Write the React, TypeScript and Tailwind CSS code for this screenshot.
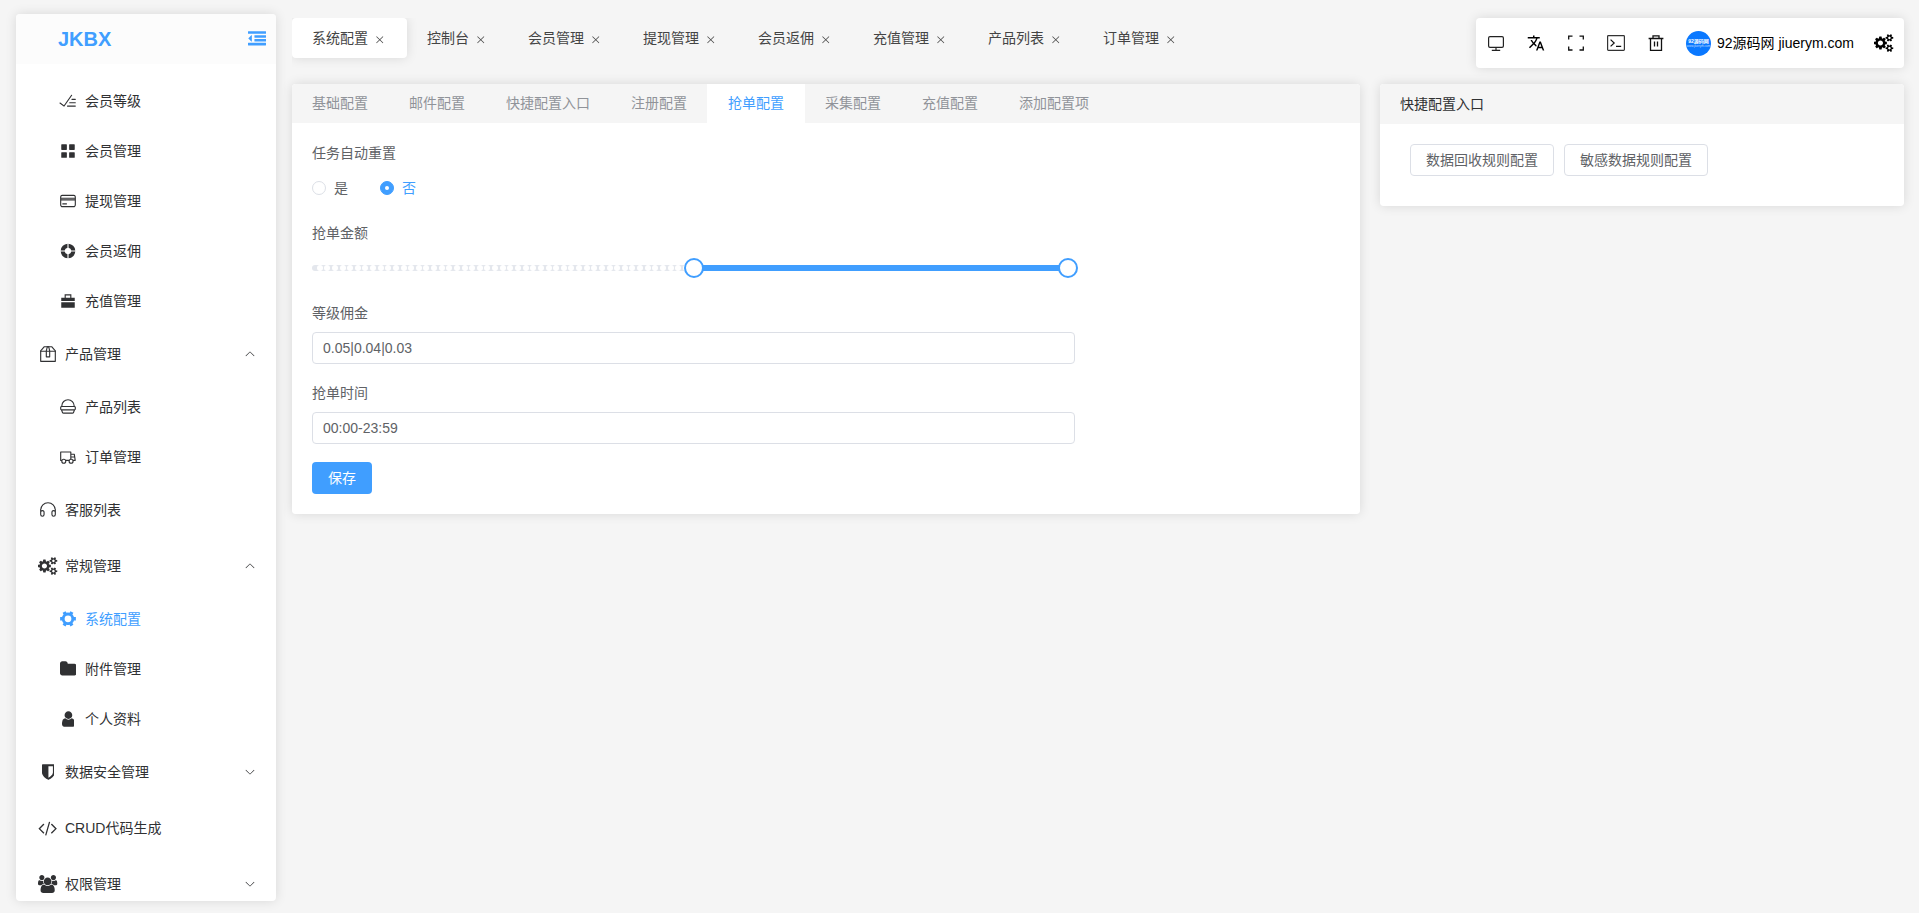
import { useState } from 'react'
import type { ReactNode } from 'react'
import { MdTranslate } from 'react-icons/md'

// Element Plus 图标，画布 1024
const EL = {
  finished:
    'M280.768 753.728 691.456 167.04a32 32 0 1 1 52.416 36.672L314.24 817.472a32 32 0 0 1-45.44 7.296l-230.4-172.8a32 32 0 0 1 38.4-51.2zM736 448a32 32 0 1 1 0-64h192a32 32 0 1 1 0 64zM608 640a32 32 0 0 1 0-64h319.936a32 32 0 1 1 0 64zM480 832a32 32 0 1 1 0-64h447.936a32 32 0 1 1 0 64z',
  menu: 'M160 448a32 32 0 0 1-32-32V160.064a32 32 0 0 1 32-32h256a32 32 0 0 1 32 32V416a32 32 0 0 1-32 32zm448 0a32 32 0 0 1-32-32V160.064a32 32 0 0 1 32-32h255.936a32 32 0 0 1 32 32V416a32 32 0 0 1-32 32zM160 896a32 32 0 0 1-32-32V608a32 32 0 0 1 32-32h256a32 32 0 0 1 32 32v256a32 32 0 0 1-32 32zm448 0a32 32 0 0 1-32-32V608a32 32 0 0 1 32-32h255.936a32 32 0 0 1 32 32v256a32 32 0 0 1-32 32z',
  creditCard:
    'M896 324.096c0-42.368-2.496-55.296-9.536-68.48a52.352 52.352 0 0 0-22.144-22.08c-13.12-7.04-26.048-9.536-68.416-9.536H228.096c-42.368 0-55.296 2.496-68.48 9.536a52.352 52.352 0 0 0-22.08 22.144c-7.04 13.12-9.536 26.048-9.536 68.416v375.808c0 42.368 2.496 55.296 9.536 68.48a52.352 52.352 0 0 0 22.144 22.08c13.12 7.04 26.048 9.536 68.416 9.536h567.808c42.368 0 55.296-2.496 68.48-9.536a52.352 52.352 0 0 0 22.08-22.144c7.04-13.12 9.536-26.048 9.536-68.416zm64 0v375.808c0 57.088-5.952 77.76-17.088 98.56-11.136 20.928-27.52 37.312-48.384 48.448-20.864 11.136-41.6 17.088-98.56 17.088H228.032c-57.088 0-77.76-5.952-98.56-17.088a116.288 116.288 0 0 1-48.448-48.384c-11.136-20.864-17.088-41.6-17.088-98.56V324.032c0-57.088 5.952-77.76 17.088-98.56 11.136-20.928 27.52-37.312 48.384-48.448 20.864-11.136 41.6-17.088 98.56-17.088H795.84c57.088 0 77.76 5.952 98.56 17.088 20.928 11.136 37.312 27.52 48.448 48.384 11.136 20.864 17.088 41.6 17.088 98.56zM64 320h896v64H64zm0 96h896v64H64zm128 224h256v64H192z',
  help: 'M926.784 480H701.312A192.512 192.512 0 0 0 544 322.688V97.216A416.064 416.064 0 0 1 926.784 480m0 64A416.064 416.064 0 0 1 544 926.784V701.312A192.512 192.512 0 0 0 701.312 544zM97.28 544h225.472A192.512 192.512 0 0 0 480 701.312v225.472A416.064 416.064 0 0 1 97.216 544zm0-64A416.064 416.064 0 0 1 480 97.216v225.472A192.512 192.512 0 0 0 322.688 480H97.216z',
  briefcase: 'M320 320V128h384v192h192v192H128V320zM128 576h768v320H128zm256-256h256.064V192H384z',
  box: 'M317.056 128 128 344.064V896h768V344.064L706.944 128zm-14.528-64h418.944a32 32 0 0 1 24.064 10.88l206.528 236.096A32 32 0 0 1 960 332.032V928a32 32 0 0 1-32 32H96a32 32 0 0 1-32-32V332.032a32 32 0 0 1 7.936-21.12L278.4 75.008A32 32 0 0 1 302.528 64z',
  boxTape:
    'M64 320h896v64H64z M448 327.872V640h128V327.872L526.08 128h-28.16zM448 64h128l64 256v352a32 32 0 0 1-32 32H416a32 32 0 0 1-32-32V320z',
  burger:
    'M160 512a32 32 0 0 0-32 32v64a32 32 0 0 0 30.08 32H864a32 32 0 0 0 32-32v-64a32 32 0 0 0-32-32zm736-58.56A96 96 0 0 1 960 544v64a96 96 0 0 1-51.968 85.312L855.36 833.6a96 96 0 0 1-89.856 62.272H258.496A96 96 0 0 1 168.64 833.6l-52.608-140.224A96 96 0 0 1 64 608v-64a96 96 0 0 1 64-90.56V448a384 384 0 1 1 768 5.44M832 448a320 320 0 0 0-640 0zM512 704H188.352l40.192 107.136a32 32 0 0 0 29.952 20.736h507.008a32 32 0 0 0 29.952-20.736L835.648 704z',
  van: 'M128.896 736H96a32 32 0 0 1-32-32V224a32 32 0 0 1 32-32h576a32 32 0 0 1 32 32v96h164.544a32 32 0 0 1 31.616 27.136l54.144 352A32 32 0 0 1 922.688 736h-91.52a144 144 0 1 1-286.272 0H415.104a144 144 0 1 1-286.272 0zm23.36-64a143.872 143.872 0 0 1 239.488 0H568.32c17.088-25.6 42.24-45.376 71.744-55.808V256H128v416zm655.488 0h77.632l-19.648-128H704v64.896A144 144 0 0 1 807.744 672m48.128-192-14.72-96H704v96zM688 832a80 80 0 1 0 0-160 80 80 0 0 0 0 160m-416 0a80 80 0 1 0 0-160 80 80 0 0 0 0 160',
  headset:
    'M896 529.152V512a384 384 0 1 0-768 0v17.152A128 128 0 0 1 320 640v128a128 128 0 1 1-256 0V512a448 448 0 1 1 896 0v256a128 128 0 1 1-256 0V640a128 128 0 0 1 192-110.848M896 640a64 64 0 0 0-128 0v128a64 64 0 0 0 128 0zm-768 0v128a64 64 0 0 0 128 0V640a64 64 0 1 0-128 0',
  tools:
    'M764.416 254.72a351.68 351.68 0 0 1 86.336 149.184H960v192.064H850.752a351.68 351.68 0 0 1-86.336 149.312l54.72 94.72-166.272 96-54.592-94.72a352.64 352.64 0 0 1-172.48 0L371.136 936l-166.272-96 54.72-94.72a351.68 351.68 0 0 1-86.336-149.312H64v-192h109.248a351.68 351.68 0 0 1 86.336-149.312L204.8 160l166.208-96h.192l54.656 94.592a352.64 352.64 0 0 1 172.48 0L652.8 64h.128L819.2 160zM704 499.968a192 192 0 1 0-384 0 192 192 0 0 0 384 0',
  arrowDown:
    'M831.872 340.864 512 652.672 192.128 340.864a30.592 30.592 0 0 0-42.752 0 29.12 29.12 0 0 0 0 41.6L489.664 714.24a32 32 0 0 0 44.672 0l340.288-331.712a29.12 29.12 0 0 0 0-41.728 30.592 30.592 0 0 0-42.752 0z',
  close:
    'M764.288 214.592 512 466.88 259.712 214.592a31.936 31.936 0 0 0-45.12 45.12L466.752 512 214.528 764.224a31.936 31.936 0 1 0 45.12 45.184L512 557.184l252.288 252.288a31.936 31.936 0 0 0 45.12-45.12L557.12 512.064l252.288-252.352a31.936 31.936 0 1 0-45.12-45.184z',
}

// Font Awesome 4 字形，y 轴向上，em 为 1792
const FA = {
  cogs: {
    width: 1920,
    d: 'M896 640q0 106-75 181t-181 75t-181-75t-75-181t75-181t181-75t181 75t75 181zM1664 128q0 52-38 90t-90 38t-90-38t-38-90q0-53 37.5-90.5t90.5-37.5t90.5 37.5t37.5 90.5zM1664 1152q0 52-38 90t-90 38t-90-38t-38-90q0-53 37.5-90.5t90.5-37.5t90.5 37.5t37.5 90.5zM1280 731v-185q0-10-7-19.5t-16-10.5l-155-24q-11-35-32-76q34-48 90-115q7-11 7-20q0-12-7-19q-23-30-82.5-89.5t-78.5-59.5q-11 0-21 7l-115 90q-37-19-77-31q-11-108-23-155q-7-24-30-24h-186q-11 0-20 7.5t-10 17.5l-23 153q-34 10-75 31l-118-89q-7-7-20-7q-11 0-21 8q-144 133-144 160q0 9 7 19q10 14 41 53t47 61q-23 44-35 82l-152 24q-10 1-17 9.5t-7 19.5v185q0 10 7 19.5t16 10.5l155 24q11 35 32 76q-34 48-90 115q-7 11-7 20q0 12 7 20q22 30 82 89t79 59q11 0 21-7l115-90q34 18 77 32q11 108 23 154q7 24 30 24h186q11 0 20-7.5t10-17.5l23-153q34-10 75-31l118 89q8 7 20 7q11 0 21-8q144-133 144-160q0-8-7-19q-12-16-42-54t-45-60q23-48 34-82l152-23q10-2 17-10.5t7-19.5zM1920 198v-140q0-16-149-31q-12-27-30-52q51-113 51-138q0-4-4-7q-122-71-124-71q-8 0-46 47t-52 68q-20-2-30-2t-30 2q-14-21-52-68t-46-47q-2 0-124 71q-4 3-4 7q0 25 51 138q-18 25-30 52q-149 15-149 31v140q0 16 149 31q13 29 30 52q-51 113-51 138q0 4 4 7q4 2 35 20t59 34t30 16q8 0 46-46.5t52-67.5q20 2 30 2t30-2q51 71 92 112l6 2q4 0 124-70q4-3 4-7q0-25-51-138q17-23 30-52q149-15 149-31zM1920 1222v-140q0-16-149-31q-12-27-30-52q51-113 51-138q0-4-4-7q-122-71-124-71q-8 0-46 47t-52 68q-20-2-30-2t-30 2q-14-21-52-68t-46-47q-2 0-124 71q-4 3-4 7q0 25 51 138q-18 25-30 52q-149 15-149 31v140q0 16 149 31q13 29 30 52q-51 113-51 138q0 4 4 7q4 2 35 20t59 34t30 16q8 0 46-46.5t52-67.5q20 2 30 2t30-2q51 71 92 112l6 2q4 0 124-70q4-3 4-7q0-25-51-138q17-23 30-52q149-15 149-31z',
  },
  folder: {
    width: 1664,
    d: 'M1664 928v-704q0-92-66-158t-158-66h-1216q-92 0-158 66t-66 158v960q0 92 66 158t158 66h320q92 0 158-66t66-158v-32h672q92 0 158-66t66-158z',
  },
  user: {
    width: 1280,
    d: 'M1280 137q0-109-62.5-187t-150.5-78h-854q-88 0-150.5 78t-62.5 187q0 85 8.5 160.5t31.5 152t58.5 131t94 89t134.5 34.5q131-128 313-128t313 128q76 0 134.5-34.5t94-89t58.5-131t31.5-152t8.5-160.5zM1024 1024q0-159-112.5-271.5t-271.5-112.5t-271.5 112.5t-112.5 271.5t112.5 271.5t271.5 112.5t271.5-112.5t112.5-271.5z',
  },
  shield: {
    width: 1280,
    d: 'M1088 576v640h-448v-1137q119 63 213 137q235 184 235 360zM1280 1344v-768q0-86-33.5-170.5t-83-150t-118-127.5t-126.5-103t-121-77.5t-89.5-49.5t-42.5-20q-12-6-26-6t-26 6q-16 7-42.5 20t-89.5 49.5t-121 77.5t-126.5 103t-118 127.5t-83 150t-33.5 170.5v768q0 26 19 45t45 19h1152q26 0 45-19t19-45z',
  },
  code: {
    width: 1920,
    d: 'M617 137l-50-50q-10-10-23-10t-23 10l-466 466q-10 10-10 23t10 23l466 466q10 10 23 10t23-10l50-50q10-10 10-23t-10-23l-393-393l393-393q10-10 10-23t-10-23zM1208 1204l-373-1291q-4-13-15.5-19.5t-23.5-2.5l-62 17q-13 4-19.5 15.5t-2.5 24.5l373 1291q4 13 15.5 19.5t23.5 2.5l62-17q13-4 19.5-15.5t2.5-24.5zM1865 553l-466-466q-10-10-23-10t-23 10l-50 50q-10 10-10 23t10 23l393 393l-393 393q-10 10-10 23t10 23l50 50q10 10 23 10t23-10l466-466q10-10 10-23t-10-23z',
  },
  group: {
    width: 1920,
    d: 'M593 640q-162-5-265-128h-134q-82 0-138 40.5t-56 118.5q0 353 124 353q6 0 43.5-21t97.5-42.5t119-21.5q67 0 133 23q-5-37-5-66q0-139 81-256zM1664 3q0-120-73-189.5t-194-69.5h-874q-121 0-194 69.5t-73 189.5q0 53 3.5 103.5t14 109t26.5 108.5t43 97.5t62 81t85.5 53.5t111.5 20q10 0 43-21.5t73-48t107-48t135-21.5t135 21.5t107 48t73 48t43 21.5q61 0 111.5-20t85.5-53.5t62-81t43-97.5t26.5-108.5t14-109t3.5-103.5zM640 1280q0-106-75-181t-181-75t-181 75t-75 181t75 181t181 75t181-75t75-181zM1344 896q0-159-112.5-271.5t-271.5-112.5t-271.5 112.5t-112.5 271.5t112.5 271.5t271.5 112.5t271.5-112.5t112.5-271.5zM1920 671q0-78-56-118.5t-138-40.5h-134q-103 123-265 128q81 117 81 256q0 29-5 66q66-23 133-23q59 0 119 21.5t97.5 42.5t43.5 21q124 0 124-353zM1792 1280q0-106-75-181t-181-75t-181 75t-75 181t75 181t181 75t181-75t75-181z',
  },
  dedent: {
    width: 1792,
    d: 'M384 992v-576q0-13-9.5-22.5t-22.5-9.5q-14 0-23 9l-288 288q-9 9-9 23t9 23l288 288q9 9 23 9q13 0 22.5-9.5t9.5-22.5zM1792 224v-192q0-13-9.5-22.5t-22.5-9.5h-1728q-13 0-22.5 9.5t-9.5 22.5v192q0 13 9.5 22.5t22.5 9.5h1728q13 0 22.5-9.5t9.5-22.5zM1792 608v-192q0-13-9.5-22.5t-22.5-9.5h-1088q-13 0-22.5 9.5t-9.5 22.5v192q0 13 9.5 22.5t22.5 9.5h1088q13 0 22.5-9.5t9.5-22.5zM1792 992v-192q0-13-9.5-22.5t-22.5-9.5h-1088q-13 0-22.5 9.5t-9.5 22.5v192q0 13 9.5 22.5t22.5 9.5h1088q13 0 22.5-9.5t9.5-22.5zM1792 1376v-192q0-13-9.5-22.5t-22.5-9.5h-1728q-13 0-22.5 9.5t-9.5 22.5v192q0 13 9.5 22.5t22.5 9.5h1728q13 0 22.5-9.5t9.5-22.5z',
  },
}

function ElIcon({ d, className = 'size-[18px]' }: { d: string; className?: string }) {
  return (
    <svg viewBox="0 0 1024 1024" fill="currentColor" className={`shrink-0 ${className}`}>
      <path d={d} />
    </svg>
  )
}

function FaIcon({ name }: { name: keyof typeof FA }) {
  const { width, d } = FA[name]
  return (
    <svg
      viewBox={`0 0 ${width} 1792`}
      width={(width / 1792) * 18}
      height={18}
      fill="currentColor"
      className="shrink-0"
    >
      <path d={d} transform="translate(0 1536) scale(1 -1)" />
    </svg>
  )
}

interface MenuEntry {
  title: string
  icon: ReactNode
  sub?: boolean
  arrow?: 'up' | 'down'
}

const menus: MenuEntry[] = [
  { title: '会员等级', icon: <ElIcon d={EL.finished} />, sub: true },
  { title: '会员管理', icon: <ElIcon d={EL.menu} />, sub: true },
  { title: '提现管理', icon: <ElIcon d={EL.creditCard} />, sub: true },
  { title: '会员返佣', icon: <ElIcon d={EL.help} />, sub: true },
  { title: '充值管理', icon: <ElIcon d={EL.briefcase} />, sub: true },
  {
    title: '产品管理',
    icon: (
      <svg viewBox="0 0 1024 1024" fill="currentColor" className="size-[18px] shrink-0">
        <path d={EL.box} />
        <path d={EL.boxTape} />
      </svg>
    ),
    arrow: 'up',
  },
  { title: '产品列表', icon: <ElIcon d={EL.burger} />, sub: true },
  { title: '订单管理', icon: <ElIcon d={EL.van} />, sub: true },
  { title: '客服列表', icon: <ElIcon d={EL.headset} /> },
  { title: '常规管理', icon: <FaIcon name="cogs" />, arrow: 'up' },
  { title: '系统配置', icon: <ElIcon d={EL.tools} />, sub: true },
  { title: '附件管理', icon: <FaIcon name="folder" />, sub: true },
  { title: '个人资料', icon: <FaIcon name="user" />, sub: true },
  { title: '数据安全管理', icon: <FaIcon name="shield" />, arrow: 'down' },
  { title: 'CRUD代码生成', icon: <FaIcon name="code" /> },
  { title: '权限管理', icon: <FaIcon name="group" />, arrow: 'down' },
]

const navTabs = ['系统配置', '控制台', '会员管理', '提现管理', '会员返佣', '充值管理', '产品列表', '订单管理']

const configTabs = [
  '基础配置',
  '邮件配置',
  '快捷配置入口',
  '注册配置',
  '抢单配置',
  '采集配置',
  '充值配置',
  '添加配置项',
]

function Sidebar() {
  return (
    <aside className="mt-[14px] flex h-[887px] w-[260px] shrink-0 flex-col overflow-hidden rounded bg-white shadow-[0_0_12px_rgba(0,0,0,0.12)]">
      <div className="flex h-[50px] shrink-0 items-center justify-between bg-[#fcfcfc] pr-[10px] pb-px pl-[42px] text-[#409eff]">
        <span className="text-xl leading-none font-bold">JKBX</span>
        <FaIcon name="dedent" />
      </div>
      <nav className="min-h-0 flex-1 overflow-hidden pt-3">
        {menus.map((item) => (
          <div
            key={item.title}
            className={`flex items-center pr-5 ${item.sub ? 'h-[50px] pl-10' : 'h-14 pl-5'} ${
              item.title === '系统配置' ? 'text-[#409eff]' : 'text-[#303133]'
            }`}
          >
            <span className="mr-[5px] flex w-6 shrink-0 justify-center">{item.icon}</span>
            <span className="flex-1">{item.title}</span>
            {item.arrow && (
              <ElIcon d={EL.arrowDown} className={item.arrow === 'up' ? 'size-3 rotate-180' : 'size-3'} />
            )}
          </div>
        ))}
      </nav>
    </aside>
  )
}

function NavTabs() {
  return (
    <div className="flex h-[50px] flex-1 overflow-hidden">
      {navTabs.map((tab, i) => (
        <div
          key={tab}
          className={`flex h-10 items-center rounded px-5 text-[#444] ${
            i === 0 ? 'bg-white shadow-[0_0_12px_rgba(0,0,0,0.12)]' : ''
          }`}
        >
          <span>{tab}</span>
          <span className="mt-[3px] ml-1 flex w-[15px] justify-center">
            <ElIcon d={EL.close} className="size-[11.5px]" />
          </span>
        </div>
      ))}
    </div>
  )
}

function ToolIcon({ children }: { children: ReactNode }) {
  return <div className="flex w-10 items-center justify-center">{children}</div>
}

function NavMenus() {
  return (
    <div className="flex h-[50px] w-[428px] shrink-0 rounded bg-white text-black shadow-[0_0_12px_rgba(0,0,0,0.12)]">
      <ToolIcon>
        <svg viewBox="0 0 18 18" fill="none" stroke="#222" strokeWidth="1.2" className="size-[18px]">
          <rect x="1.6" y="2.6" width="14.8" height="10.8" rx="1.4" />
          <path d="M9 13.4v2.8M4.8 16.4h8.4" />
        </svg>
      </ToolIcon>
      <ToolIcon>
        <MdTranslate className="size-[18px]" />
      </ToolIcon>
      <ToolIcon>
        <svg viewBox="0 0 18 18" fill="none" stroke="#111" strokeWidth="1.3" className="size-[18px]">
          <path d="M1.7 5.6V2.2h3.8M12.5 2.2h3.8v3.4M16.3 12.6v3.4h-3.8M5.5 16H1.7v-3.4" />
        </svg>
      </ToolIcon>
      <ToolIcon>
        <svg viewBox="0 0 18 18" fill="none" stroke="#333" strokeWidth="1.2" className="size-[18px]">
          <rect x="0.6" y="1.6" width="16.8" height="14.8" rx="0.8" />
          <path d="M3.6 5.6 7.2 9l-3.6 3.4M9 12.4h5.2" stroke="#111" />
        </svg>
      </ToolIcon>
      <ToolIcon>
        <svg viewBox="0 0 18 18" fill="none" stroke="#111" strokeWidth="1.3" className="size-[18px]">
          <path d="M1.6 4.5h14.8M6 4.2V1.8h6v2.4M3.5 4.8v11.6h11V4.8M7.5 7.5v5M10.5 7.5v5" />
        </svg>
      </ToolIcon>
      <div className="flex flex-1 items-center pl-[10px]">
        <div className="flex size-[25px] shrink-0 flex-col items-center justify-center rounded-full bg-[#0a78ff] text-white">
          <span className="text-[5px] leading-[5px] font-bold whitespace-nowrap">92源码网</span>
          <span className="text-[3px] leading-[4px] whitespace-nowrap opacity-70">www.jiuerym.com</span>
        </div>
        <span className="ml-[6px] whitespace-nowrap">92源码网 jiuerym.com</span>
      </div>
      <ToolIcon>
        <FaIcon name="cogs" />
      </ToolIcon>
    </div>
  )
}

function Radio({ label, checked, onClick }: { label: string; checked: boolean; onClick: () => void }) {
  return (
    <button type="button" onClick={onClick} className="mr-8 flex h-8 items-center">
      <span
        className={`flex size-[14px] items-center justify-center rounded-full border ${
          checked ? 'border-[#409eff] bg-[#409eff]' : 'border-[#dcdfe6] bg-white'
        }`}
      >
        {checked && <span className="size-1 rounded-full bg-white" />}
      </span>
      <span className={`pl-2 ${checked ? 'text-[#409eff]' : ''}`}>{label}</span>
    </button>
  )
}

function RangeSlider({ min, max }: { min: number; max: number }) {
  const stops = Array.from({ length: 99 }, (_, i) => i + 1).filter((n) => n < min || n > max)

  return (
    <div className="flex h-8 items-center">
      <div className="relative h-[6px] w-full rounded-[3px] bg-[#e4e7ed]">
        {stops.map((n) => (
          <span
            key={n}
            className="absolute top-0 size-[6px] -translate-x-1/2 rounded-full bg-white"
            style={{ left: `${n}%` }}
          />
        ))}
        <div
          className="absolute top-0 h-[6px] bg-[#409eff]"
          style={{ left: `${min}%`, width: `${max - min}%` }}
        />
        {[min, max].map((n) => (
          <span
            key={n}
            className="absolute -top-[7px] size-5 -translate-x-1/2 rounded-full border-2 border-[#409eff] bg-white"
            style={{ left: `${n}%` }}
          />
        ))}
      </div>
    </div>
  )
}

function FormItem({ label, children }: { label: string; children: ReactNode }) {
  return (
    <div className="mb-[18px] w-[763px]">
      <div className="mb-2 leading-[22px]">{label}</div>
      {children}
    </div>
  )
}

const inputClass = 'block h-8 w-full rounded border border-[#dcdfe6] bg-white px-[10px] text-[#606266] outline-none'

function ConfigCard() {
  const [active, setActive] = useState('抢单配置')
  const [autoReset, setAutoReset] = useState(false)

  return (
    <section className="w-[1068px] shrink-0 overflow-hidden rounded bg-white">
      <div className="flex h-[39px] bg-[#f5f5f5]">
        {configTabs.map((tab) => (
          <button
            key={tab}
            type="button"
            onClick={() => setActive(tab)}
            className={`-ml-px px-[21px] pb-px ${active === tab ? 'bg-white text-[#409eff]' : 'text-[#909399]'}`}
          >
            {tab}
          </button>
        ))}
      </div>
      <div className="px-5 pt-[19px] pb-5 text-[#606266]">
        <FormItem label="任务自动重置">
          <div className="flex">
            <Radio label="是" checked={autoReset} onClick={() => setAutoReset(true)} />
            <Radio label="否" checked={!autoReset} onClick={() => setAutoReset(false)} />
          </div>
        </FormItem>
        <FormItem label="抢单金额">
          <RangeSlider min={50} max={99.1} />
        </FormItem>
        <FormItem label="等级佣金">
          <input className={inputClass} defaultValue="0.05|0.04|0.03" />
        </FormItem>
        <FormItem label="抢单时间">
          <input className={inputClass} defaultValue="00:00-23:59" />
        </FormItem>
        <button type="button" className="block h-8 w-[60px] rounded bg-[#409eff] text-white">
          保存
        </button>
      </div>
    </section>
  )
}

function QuickEntry() {
  return (
    <section className="flex-1 overflow-hidden rounded bg-white">
      <div className="flex h-10 items-center bg-[#f5f5f5] px-5 text-[#303133]">快捷配置入口</div>
      <div className="flex gap-[10px] px-[30px] pt-5 pb-[30px] text-[#606266]">
        {['数据回收规则配置', '敏感数据规则配置'].map((name) => (
          <button key={name} type="button" className="h-8 w-36 rounded border border-[#dcdfe6]">
            {name}
          </button>
        ))}
      </div>
    </section>
  )
}

export default function App() {
  return (
    <div className="flex h-[913px] w-full overflow-hidden bg-[#f5f5f5] pr-[15px] pl-4 font-['Liberation_Sans','Noto_Sans_CJK_SC',sans-serif] text-sm">
      <Sidebar />
      <main className="ml-4 min-w-0 flex-1 pt-[18px]">
        <header className="flex">
          <NavTabs />
          <NavMenus />
        </header>
        <div className="mt-4 flex items-start gap-5">
          <div className="flex shrink-0 rounded shadow-[0_0_12px_rgba(0,0,0,0.12)]">
            <ConfigCard />
          </div>
          <div className="flex flex-1 rounded shadow-[0_0_12px_rgba(0,0,0,0.12)]">
            <QuickEntry />
          </div>
        </div>
      </main>
    </div>
  )
}
